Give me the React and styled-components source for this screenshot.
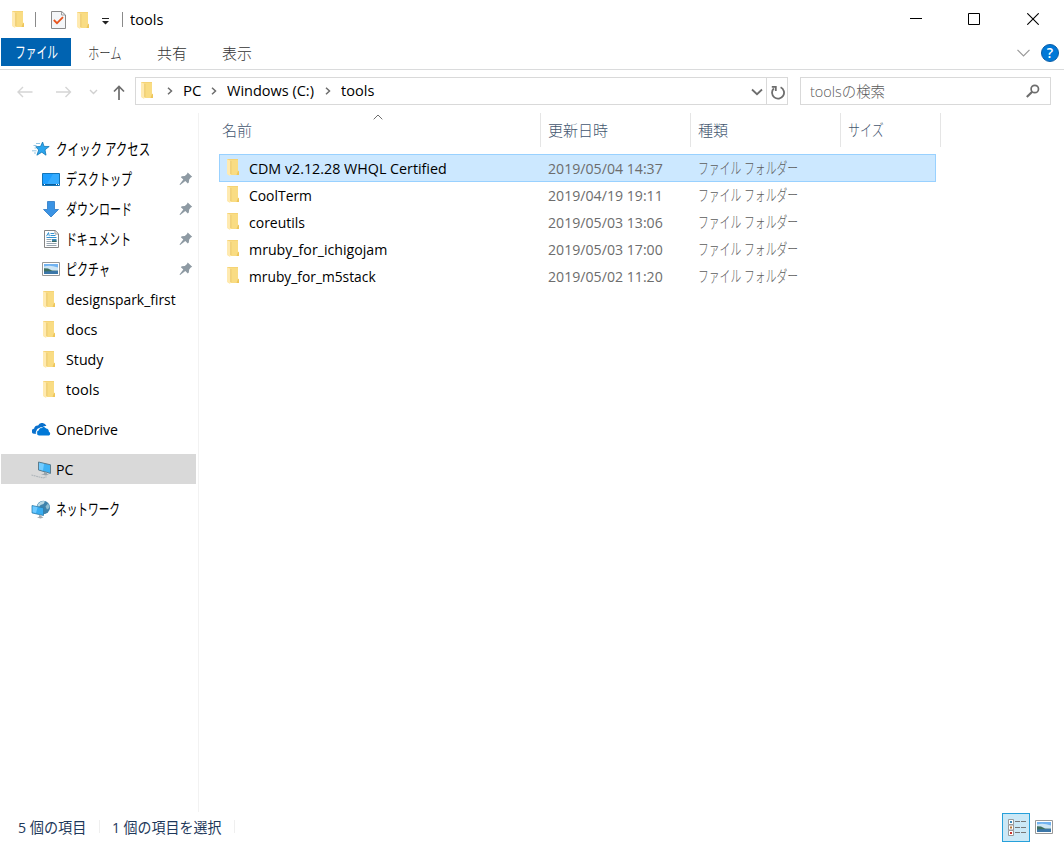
import React, { useLayoutEffect, useRef, useState } from 'react';
import styled, { createGlobalStyle } from 'styled-components';

const GlobalStyle = createGlobalStyle`
  * { box-sizing: border-box; }
  body {
    margin: 0;
    background: #fff;
    overflow: hidden;
    font-family: 'Open Sans', 'Noto Sans CJK JP', sans-serif;
    font-size: 15px;
    color: #000;
  }
`;

const TextBox = styled.span`
  display: block;
  flex: none;
  width: ${p => p.$w}px;
  height: 20px;
  line-height: 20px;
  margin-left: ${p => p.$ml || 0}px;
  color: ${p => p.$color || 'inherit'};
  font-size: ${p => (p.$kana ? 16 : 15)}px;
  font-weight: ${p => (p.$light ? 300 : 400)};
  white-space: nowrap;
`;

const TextInner = styled.span`
  display: inline-block;
  height: 20px;
  transform-origin: 0 50%;
`;

// condenses a label so that it takes exactly w pixels
function Text({ w, ml, color, kana, light, children }) {
  const ref = useRef(null);
  const [scale, setScale] = useState(1);
  useLayoutEffect(() => {
    setScale(w / ref.current.offsetWidth);
  }, [w, children]);
  return (
    <TextBox $w={w} $ml={ml} $color={color} $kana={kana} $light={light}>
      <TextInner ref={ref} style={{ transform: `scaleX(${scale})` }}>{children}</TextInner>
    </TextBox>
  );
}

const Icon = styled.svg`
  display: block;
  flex: none;
  width: ${p => p.$w}px;
  height: ${p => p.$h}px;
  margin-left: ${p => p.$ml || 0}px;
  margin-top: ${p => p.$mt || 0}px;
`;

const Window = styled.div`
  display: flex;
  flex-direction: column;
  width: 1064px;
  height: 843px;
  background: #fff;
`;

const TitleBar = styled.header`
  display: flex;
  align-items: center;
  height: 38px;
  padding: 0 25px 0 12px;
`;

const Divider = styled.div`
  flex: none;
  width: 1px;
  height: ${p => p.$h}px;
  margin-left: ${p => p.$ml}px;
  background: ${p => p.$color};
`;

const Spacer = styled.div`
  flex: 1;
`;

const Tabs = styled.nav`
  display: flex;
  height: 32px;
  border-bottom: 1px solid #dadbdc;
  color: #333;
`;

const FileTab = styled.div`
  display: flex;
  align-items: center;
  width: 70px;
  height: 28px;
  margin-left: 1px;
  background: #0063b1;
  color: #fff;
`;

const Tab = styled.div`
  display: flex;
  align-items: center;
  height: 30px;
  margin-left: ${p => p.$ml}px;
`;

const HelpBadge = styled.div`
  display: flex;
  align-items: center;
  justify-content: center;
  width: 18px;
  height: 18px;
  margin: 6px 5px 0 11px;
  border: 1px solid #0a5ea8;
  border-radius: 50%;
  background: #0078d7;
  color: #fff;
  font-size: 14px;
  font-weight: 600;
  line-height: 16px;
`;

const AddressRow = styled.div`
  display: flex;
  align-items: flex-start;
  height: 43px;
  padding-top: 7px;
`;

const NavButtons = styled.div`
  display: flex;
  align-items: center;
  width: 135px;
  height: 28px;
  padding: 2px 0 0 17px;
`;

const AddressBar = styled.div`
  display: flex;
  align-items: center;
  width: 653px;
  height: 28px;
  padding: 0 0 2px 5px;
  border: 1px solid #d9d9d9;
`;

const RefreshButton = styled.div`
  display: flex;
  align-items: center;
  justify-content: center;
  width: 21px;
  height: 26px;
  margin: 2px 0 0 3px;
  border-left: 1px solid #d9d9d9;
`;

const SearchBox = styled.div`
  display: flex;
  align-items: center;
  width: 251px;
  height: 28px;
  margin-left: 12px;
  padding: 0 10px 0 9px;
  border: 1px solid #d9d9d9;
  color: #6d6d6d;
`;

const Main = styled.div`
  display: flex;
  height: 699px;
`;

const Sidebar = styled.aside`
  width: 199px;
  padding-top: 21px;
  border-right: 1px solid #f2f2f2;
`;

const SideRow = styled.div`
  display: flex;
  align-items: center;
  width: 195px;
  height: 30px;
  margin: 0 0 ${p => (p.$gap ? 10 : 0)}px 1px;
  padding: 0 3px 0 ${p => (p.$top ? 30 : 40)}px;
  background: ${p => (p.$active ? '#d9d9d9' : 'transparent')};
`;

const SideIcon = styled.div`
  display: flex;
  align-items: center;
  flex: none;
  width: 25px;
`;

const FileList = styled.main`
  flex: 1;
`;

const SortMark = styled.div`
  position: absolute;
  top: 1px;
  left: 174px;
`;

const Columns = styled.div`
  display: flex;
  height: 34px;
  margin-bottom: 7px;
  color: #43566f;
`;

const Column = styled.div`
  position: relative;
  display: flex;
  align-items: center;
  width: ${p => p.$w}px;
  padding-left: ${p => p.$pl}px;
  border-right: 1px solid #e5e5e5;
`;

const FileRow = styled.div`
  display: grid;
  grid-template-columns: 29px 299px 150px auto;
  align-items: center;
  width: 717px;
  height: ${p => (p.$selected ? 28 : 27)}px;
  margin-left: 20px;
  padding-left: ${p => (p.$selected ? 0 : 1)}px;
  padding-bottom: ${p => (p.$selected ? 0 : 1)}px;
  background: ${p => (p.$selected ? '#cce8ff' : 'transparent')};
  border: ${p => (p.$selected ? '1px solid #99d1ff' : 'none')};
  color: #6d6d6d;
`;

const StatusBar = styled.footer`
  display: flex;
  align-items: center;
  height: 31px;
  padding: 0 11px 2px 18px;
  color: #1e395b;
`;

const ViewButton = styled.div`
  display: flex;
  align-items: center;
  justify-content: center;
  width: 28px;
  height: 29px;
  margin: 2px 5px 0 0;
  background: #cbe8f6;
  border: 1px solid #26a0da;
`;

const FolderIcon = (props) => (
  <Icon $w={13} $h={17} viewBox="0 0 13 17" {...props}>
    <path d="M0 0h11v11.5l1 .8V16H1z" fill="#f5d375" />
    <path d="M4 1h7v11l1 .4V16H4z" fill="#f9dc83" />
    <path d="M11 12l1 .5V16H9.5z" fill="#eec65b" />
    <path d="M0 .2l3.8 1.6v13.5L3 17l-3-2z" fill="#ffeab0" />
    <path d="M3.8 2v13" stroke="#e3bb58" strokeWidth=".7" />
  </Icon>
);

const Chevron = ({ ml }) => (
  <Icon $w={6} $h={8} $ml={ml} $mt={1} viewBox="0 0 6 8" fill="none">
    <path d="M1 .7L4.5 4 1 7.3" stroke="#6d6d6d" strokeWidth="1.5" />
  </Icon>
);

const PinIcon = () => (
  <Icon $w={14} $h={14} viewBox="0 0 14 14" fill="#8e9aa3">
    <path d="M8.7.5L13.2 4.8l-1.4.8-1.6 2 -.4 3-1 .8-2.5-2.4L1.2 13l-.7-.6L4.3 7.5 1.9 5.2l.8-1 3.1-.2 2.2-2z" />
  </Icon>
);

const StarIcon = () => (
  <Icon $w={18} $h={16} viewBox="0 0 18 16" $ml={1}>
    <path d="M10.6 1l1.4 4.4 5.2.1-4.2 3.3 1 5.4-4.2-3-4.9 3 1.8-5.2-2.9-3.3 4.7-.2z" fill="#2ba5ee" stroke="#1477b4" strokeWidth=".8" />
    <path d="M4 2.5h4M1.5 4.5h3M2.5 7h2M0 9.8h4.6M2 12h2" stroke="#79b6da" strokeWidth=".8" />
  </Icon>
);

const DesktopIcon = () => (
  <Icon $w={18} $h={13} viewBox="0 0 18 13" $ml={1}>
    <path d="M.5.5h17v12H.5z" fill="#1e9fff" stroke="#1275b8" />
    <path d="M11 1h6v10H5z" fill="#35acff" />
    <path d="M1 11.5h16" stroke="#0b5c99" />
    <path d="M2 11.5h1M14 11.5h1M16 11.5h1" stroke="#fff" />
  </Icon>
);

const DownloadIcon = () => (
  <Icon $w={18} $h={17} viewBox="0 0 18 17" $ml={1}>
    <path d="M5.5.5h7v8h4L9 16 1.5 8.5h4z" fill="#3a93e4" stroke="#2b78c4" strokeWidth=".8" />
  </Icon>
);

const DocumentIcon = () => (
  <Icon $w={15} $h={18} viewBox="0 0 15 18" $ml={3}>
    <path d="M.5.5h10.7l3.3 3.3v13.7H.5z" fill="#fff" stroke="#858585" />
    <path d="M11 .7V4h3.3" fill="none" stroke="#858585" strokeWidth=".8" />
    <path d="M2.5 6.2l2-3.6.8 3.6" fill="none" stroke="#1e87cc" strokeWidth=".9" />
    <path d="M6.5 3.5h3.5M6.5 5.5h5M2.5 7.5h10" fill="none" stroke="#1e87cc" strokeWidth=".9" />
    <path d="M2.5 9.5h5M2.5 11.5h5M2.5 13.5h10M2.5 15.5h10" stroke="#8b9ba7" strokeWidth=".9" />
    <path d="M8 9h4.5v3H8z" fill="#3b88b8" />
    <path d="M8 11l4.5-.5V12H8z" fill="#366a60" />
  </Icon>
);

const PictureIcon = ({ ml = 1, mt }) => (
  <Icon $w={18} $h={14} viewBox="0 0 18 14" $ml={ml} $mt={mt}>
    <path d="M.5.5h17v13H.5z" fill="#fff" stroke="#989898" />
    <path d="M2 2h14v10H2z" fill="#72b3f1" />
    <path d="M2 4.5q6-2 14 1V9H2z" fill="#cde5f5" />
    <path d="M2 6.2l4 .4 4 1.8 6 .4V10H2z" fill="#3f6f61" />
    <path d="M2 9.5l14-.8V12H2z" fill="#3b76a8" />
  </Icon>
);

const CloudIcon = () => (
  <Icon $w={19} $h={13} viewBox="0 0 19 13" $ml={1}>
    <path d="M4.2 10.8H2.5a2.5 2.5 0 01-.4-5 3.4 3.4 0 014-3.3A4.5 4.5 0 0114.4 3q-3-.6-4.6 2.2-4.8-.8-5.5 3.2-1 1-.1 2.4z" fill="#0a70cc" />
    <path d="M7 12.5a2.7 2.7 0 01-.3-5.3 4 4 0 017.4-1.6 3.3 3.3 0 012.8 3.2 2 2 0 01.1 3.7z" fill="#0078d7" />
    <path d="M4.8 11.6q-1-3.5 1.5-4.7 1-3 4.2-2.4" fill="none" stroke="#fff" strokeWidth=".8" />
  </Icon>
);

const ComputerIcon = () => (
  <Icon $w={21} $h={18} viewBox="0 0 21 18" $mt={1}>
    <path d="M7.5 1l12 2.8v8.6L7.5 9z" fill="#3db1f5" stroke="#5c7c8d" strokeWidth="1" />
    <path d="M8 1.8l5 1.2-1 6.6-4-1.1z" fill="#73ccff" />
    <path d="M13 10.9v1.8l-3 .6 5 1.2 3-1-2-.6v-1.3z" fill="#9aa4ab" />
    <path d="M.5 14l9 2.3 3 .6 3-1.2" fill="none" stroke="#aeb5ba" strokeWidth="1.1" strokeDasharray="1.8 .6" />
  </Icon>
);

const NetworkIcon = () => (
  <Icon $w={20} $h={19} viewBox="0 0 20 19">
    <circle cx="12.3" cy="7.5" r="6.7" fill="#3f83ac" />
    <path d="M7 4q3.5-4 7-2.6l-1.5 2.6-3 1-1 1.6-2.5.4z" fill="#b9d9e4" />
    <path d="M14.5 6.5l2.5-3q1.6 2 1.2 4.5l-2.2 1.5z" fill="#8fbdd0" />
    <path d="M1 5.5l11.5 2.4v7.6L1 12.9z" fill="#38adf1" stroke="#317da9" strokeWidth=".8" />
    <path d="M1.6 6.2l5 1.1-1.6 5.6-3.4-.7z" fill="#70caff" />
    <path d="M8 15v1.7l-2 .7 3.5 1 3-1-2-.9v-1z" fill="#a4acb1" />
  </Icon>
);

const sideItems = [
  { label: 'クイック アクセス', w: 94, icon: <StarIcon />, top: true, kana: true },
  { label: 'デスクトップ', w: 66, icon: <DesktopIcon />, pin: true, kana: true },
  { label: 'ダウンロード', w: 66, icon: <DownloadIcon />, pin: true, kana: true },
  { label: 'ドキュメント', w: 65, icon: <DocumentIcon />, pin: true, kana: true },
  { label: 'ピクチャ', w: 44, icon: <PictureIcon />, pin: true, kana: true },
  { label: 'designspark_first', w: 110, icon: <FolderIcon $ml={2} /> },
  { label: 'docs', w: 32, icon: <FolderIcon $ml={2} /> },
  { label: 'Study', w: 37, icon: <FolderIcon $ml={2} /> },
  { label: 'tools', w: 33, icon: <FolderIcon $ml={2} />, gap: true },
  { label: 'OneDrive', w: 62, icon: <CloudIcon />, top: true, gap: true },
  { label: 'PC', w: 17, icon: <ComputerIcon />, top: true, gap: true, active: true },
  { label: 'ネットワーク', w: 64, icon: <NetworkIcon />, top: true, kana: true },
];

const files = [
  { name: 'CDM v2.12.28 WHQL Certified', w: 198, date: '2019/05/04 14:37', selected: true },
  { name: 'CoolTerm', w: 63, date: '2019/04/19 19:11' },
  { name: 'coreutils', w: 56, date: '2019/05/03 13:06' },
  { name: 'mruby_for_ichigojam', w: 138, date: '2019/05/03 17:00' },
  { name: 'mruby_for_m5stack', w: 127, date: '2019/05/02 11:20' },
];

function Title() {
  return (
    <TitleBar>
      <FolderIcon />
      <Divider $h={15} $ml={10} $color="#8a8a8a" />
      <Icon $w={15} $h={18} $ml={15} $mt={2} viewBox="0 0 15 18">
        <path d="M.5.5h10.2l3.8 3.5v13.5H.5z" fill="#f4f6f8" stroke="#8a8a8a" />
        <path d="M10.5.7V4h3.8" fill="none" stroke="#8a8a8a" strokeWidth=".8" />
        <path d="M2.8 9l3.2 3.2 6-6" fill="none" stroke="#e8541d" strokeWidth="1.8" />
      </Icon>
      <FolderIcon $ml={11} $mt={2} />
      <Icon $w={7} $h={7} $ml={12} $mt={4} viewBox="0 0 7 7">
        <path d="M0 0h7v1H0zM0 3h7L3.5 6.5z" fill="#222" />
      </Icon>
      <Divider $h={15} $ml={13} $color="#8a8a8a" />
      <Text w={33} ml={7}>tools</Text>
      <Spacer />
      <Icon $w={12} $h={12} viewBox="0 0 12 12">
        <path d="M0 5.5h12" stroke="#000" />
      </Icon>
      <Icon $w={12} $h={12} $ml={46} viewBox="0 0 12 12">
        <path d="M.5.5h11v11H.5z" fill="none" stroke="#000" />
      </Icon>
      <Icon $w={12} $h={12} $ml={47} viewBox="0 0 12 12">
        <path d="M.3.3l11.4 11.4M11.7.3L.3 11.7" stroke="#000" strokeWidth="1.1" />
      </Icon>
    </TitleBar>
  );
}

function Ribbon() {
  return (
    <Tabs>
      <FileTab><Text w={43} ml={14} kana>ファイル</Text></FileTab>
      <Tab $ml={17}><Text w={34} kana light>ホーム</Text></Tab>
      <Tab $ml={35}><Text w={30} light>共有</Text></Tab>
      <Tab $ml={35}><Text w={30} light>表示</Text></Tab>
      <Spacer />
      <Icon $w={13} $h={8} $mt={11} viewBox="0 0 13 8">
        <path d="M.5.8l6 6 6-6" fill="none" stroke="#999" strokeWidth="1.2" />
      </Icon>
      <HelpBadge>?</HelpBadge>
    </Tabs>
  );
}

function Address() {
  return (
    <AddressRow>
      <NavButtons>
        <Icon $w={16} $h={12} viewBox="0 0 16 12" fill="none" stroke="#d5d5d5" strokeWidth="1.4">
          <path d="M15.5 6H1M6 1L1 6l5 5" />
        </Icon>
        <Icon $w={16} $h={12} $ml={23} viewBox="0 0 16 12" fill="none" stroke="#d5d5d5" strokeWidth="1.4">
          <path d="M0 6h14.5M9.5 1l5 5-5 5" />
        </Icon>
        <Icon $w={9} $h={6} $ml={17} viewBox="0 0 9 6" fill="none" stroke="#d0d0d0" strokeWidth="1.4">
          <path d="M1 1l3.5 3.5L8 1" />
        </Icon>
        <Icon $w={12} $h={15} $ml={15} viewBox="0 0 12 15" fill="none" stroke="#6d6d6d" strokeWidth="1.7">
          <path d="M6 15V1.5M1 6.5l5-5 5 5" />
        </Icon>
      </NavButtons>
      <AddressBar>
        <FolderIcon />
        <Chevron ml={13} />
        <Text w={18} ml={10}>PC</Text>
        <Chevron ml={10} />
        <Text w={87} ml={10}>Windows (C:)</Text>
        <Chevron ml={11} />
        <Text w={33} ml={10}>tools</Text>
        <Spacer />
        <Icon $w={12} $h={8} $mt={4} viewBox="0 0 12 8" fill="none" stroke="#6d6d6d" strokeWidth="1.8">
          <path d="M1 1.5l5 4.7 5-4.7" />
        </Icon>
        <RefreshButton>
          <Icon $w={15} $h={15} $mt={2} viewBox="0 0 15 15" fill="none" stroke="#6d6d6d" strokeWidth="1.8">
            <path d="M10.6 2.2A6 6 0 113.8 3.4M1.8 1.8h4v4.2" />
          </Icon>
        </RefreshButton>
      </AddressBar>
      <SearchBox>
        <Text w={75} color="#5a5a5a" light>toolsの検索</Text>
        <Spacer />
        <Icon $w={14} $h={14} viewBox="0 0 14 14" fill="none" stroke="#6d6d6d">
          <circle cx="8.8" cy="5" r="3.7" strokeWidth="1.7" />
          <path d="M6.2 7.8L.8 13" strokeWidth="2.2" />
        </Icon>
      </SearchBox>
    </AddressRow>
  );
}

export default function App() {
  return (
    <Window>
      <GlobalStyle />
      <Title />
      <Ribbon />
      <Address />
      <Main>
        <Sidebar>
          {sideItems.map(item => (
            <SideRow key={item.label} $top={item.top} $gap={item.gap} $active={item.active}>
              <SideIcon>{item.icon}</SideIcon>
              <Text w={item.w} kana={item.kana}>{item.label}</Text>
              <Spacer />
              {item.pin && <PinIcon />}
            </SideRow>
          ))}
        </Sidebar>
        <FileList>
          <Columns>
            <Column $w={342} $pl={23}>
              <Text w={30} light>名前</Text>
              <SortMark>
                <Icon $w={10} $h={6} viewBox="0 0 10 6">
                  <path d="M.7 5.3L5 1l4.3 4.3" fill="none" stroke="#6d6d6d" />
                </Icon>
              </SortMark>
            </Column>
            <Column $w={150} $pl={7}><Text w={60} light>更新日時</Text></Column>
            <Column $w={150} $pl={7}><Text w={30} light>種類</Text></Column>
            <Column $w={100} $pl={7}><Text w={36} kana light>サイズ</Text></Column>
          </Columns>
          {files.map(file => (
            <FileRow key={file.name} $selected={file.selected}>
              <FolderIcon $ml={7} $mt={file.selected ? -2 : -1} />
              <Text w={file.w} color="#000">{file.name}</Text>
              <Text w={115}>{file.date}</Text>
              <Text w={100} kana color="#5c5c5c" light>ファイル フォルダー</Text>
            </FileRow>
          ))}
        </FileList>
      </Main>
      <StatusBar>
        <Text w={68}>5 個の項目</Text>
        <Divider $h={13} $ml={13} $color="#efefef" />
        <Text w={109} ml={12}>1 個の項目を選択</Text>
        <Divider $h={13} $ml={13} $color="#efefef" />
        <Spacer />
        <ViewButton>
          <Icon $w={18} $h={17} $ml={2} viewBox="0 0 18 17">
            <path d="M.5.5h5v5h-5zM.5 6h5v5h-5zM.5 11.5h5v5h-5z" fill="#fff" stroke="#999" />
            <path d="M7 2.5h11M7 8.5h11M7 13.5h11" stroke="#777" strokeDasharray="5 1" />
            <path d="M2 2h2v2H2z" fill="#3b88b8" />
            <path d="M2 7.5h2v2H2z" fill="#b0743a" />
            <path d="M2 13h2v2H2z" fill="#c8302a" />
          </Icon>
        </ViewButton>
        <PictureIcon ml={0} mt={1} />
      </StatusBar>
    </Window>
  );
}
